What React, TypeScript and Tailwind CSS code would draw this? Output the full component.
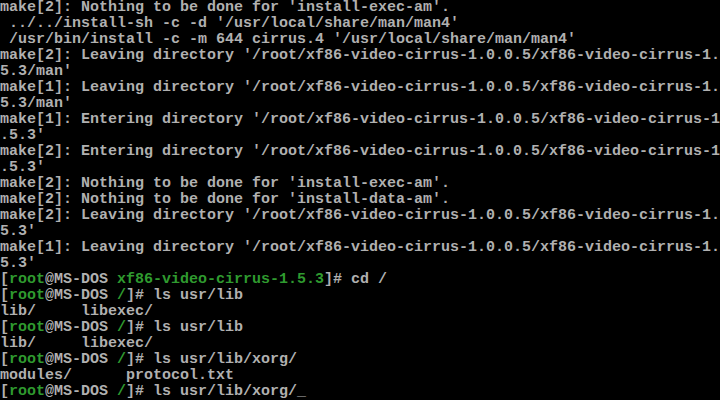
import React from 'react';

type Seg = { t: string; g?: boolean };

const plain = (t: string): Seg[] => [{ t }];

const prompt = (dir: string, cmd: string): Seg[] => [
  { t: '[' },
  { t: 'root', g: true },
  { t: '@MS-DOS ' },
  { t: dir, g: true },
  { t: ']# ' + cmd },
];

const lines: Seg[][] = [
  plain("make[2]: Nothing to be done for 'install-exec-am'."),
  plain(" ../../install-sh -c -d '/usr/local/share/man/man4'"),
  plain(" /usr/bin/install -c -m 644 cirrus.4 '/usr/local/share/man/man4'"),
  plain("make[2]: Leaving directory '/root/xf86-video-cirrus-1.0.0.5/xf86-video-cirrus-1."),
  plain("5.3/man'"),
  plain("make[1]: Leaving directory '/root/xf86-video-cirrus-1.0.0.5/xf86-video-cirrus-1."),
  plain("5.3/man'"),
  plain("make[1]: Entering directory '/root/xf86-video-cirrus-1.0.0.5/xf86-video-cirrus-1"),
  plain(".5.3'"),
  plain("make[2]: Entering directory '/root/xf86-video-cirrus-1.0.0.5/xf86-video-cirrus-1"),
  plain(".5.3'"),
  plain("make[2]: Nothing to be done for 'install-exec-am'."),
  plain("make[2]: Nothing to be done for 'install-data-am'."),
  plain("make[2]: Leaving directory '/root/xf86-video-cirrus-1.0.0.5/xf86-video-cirrus-1."),
  plain("5.3'"),
  plain("make[1]: Leaving directory '/root/xf86-video-cirrus-1.0.0.5/xf86-video-cirrus-1."),
  plain("5.3'"),
  prompt('xf86-video-cirrus-1.5.3', 'cd /'),
  prompt('/', 'ls usr/lib'),
  plain('lib/     libexec/'),
  prompt('/', 'ls usr/lib'),
  plain('lib/     libexec/'),
  prompt('/', 'ls usr/lib/xorg/'),
  plain('modules/      protocol.txt'),
  prompt('/', 'ls usr/lib/xorg/_'),
];

export default function App() {
  return (
    <div className="w-[720px] h-[400px] overflow-hidden bg-black text-[#b0b0b0] font-['Liberation_Mono',monospace] text-[15px] font-bold leading-4">
      {lines.map((segs, i) => (
        <div key={i} className="h-4 whitespace-pre">
          {segs.map((s, j) => (
            <span key={j} className={s.g ? 'text-[#2f9a2f]' : undefined}>
              {s.t}
            </span>
          ))}
        </div>
      ))}
    </div>
  );
}
